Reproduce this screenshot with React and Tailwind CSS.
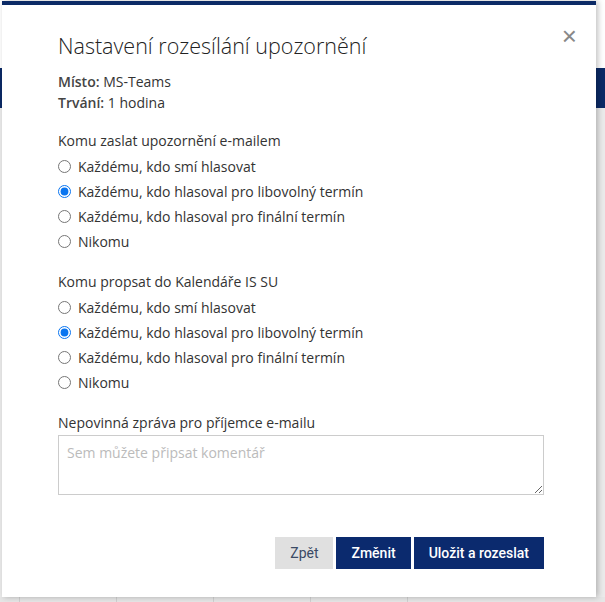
import React from 'react';

const RadioGroup = ({ name, checked }) => {
  const options = [
    'Každému, kdo smí hlasovat',
    'Každému, kdo hlasoval pro libovolný termín',
    'Každému, kdo hlasoval pro finální termín',
    'Nikomu',
  ];
  return (
    <div className="flex flex-col">
      {options.map((opt, i) => (
        <label key={opt} className="flex items-center h-[25px] cursor-pointer">
          <input
            type="radio"
            name={name}
            defaultChecked={i === checked}
            className="m-0 w-[13px] h-[13px] accent-[#0a75f0]"
          />
          <span className="ml-[7px]">{opt}</span>
        </label>
      ))}
    </div>
  );
};

export default function App() {
  return (
    <div className="relative w-[605px] h-[602px] overflow-hidden bg-[#ebebeb] text-[#333] font-['Open_Sans',sans-serif] text-[14px]">
      {/* page behind the modal */}
      <div className="h-[68px] bg-white" />
      <div className="h-[40px] bg-[#0b2a66]" />
      <div className="absolute bottom-0 left-0 right-0 h-[5px] bg-[#e6e6e6] flex">
        <div className="w-[20px] border-r border-[#d0d0d0]" />
        <div className="w-[97px] border-r border-[#d0d0d0]" />
        <div className="w-[97px] border-r border-[#d0d0d0]" />
        <div className="w-[97px] border-r border-[#d0d0d0]" />
        <div className="w-[97px] border-r border-[#d0d0d0]" />
      </div>

      {/* modal */}
      <div className="absolute left-[2px] top-[1px] w-[594px] h-[596px] bg-white border-t-[4px] border-[#0b2a66] shadow-[2px_0_6px_rgba(0,0,0,0.25)]">
        <button className="absolute right-[19px] top-[18px] text-[#888] text-[26px] leading-none font-['Liberation_Sans',sans-serif]">×</button>
        <div className="pl-[56px] pr-[52px] pt-[26px]">
          <h2 className="text-[21.5px] font-light leading-[30px] text-[#222]">
            Nastavení rozesílání upozornění
          </h2>
          <div className="mt-[10px] leading-[21px]">
            <div><b className="font-semibold text-[#444]">Místo:</b> MS-Teams</div>
            <div><b className="font-semibold text-[#444]">Trvání:</b> 1 hodina</div>
          </div>

          <div className="mt-[18px] leading-[20px]">Komu zaslat upozornění e-mailem</div>
          <div className="mt-[3px]">
            <RadioGroup name="mail" checked={1} />
          </div>

          <div className="mt-[18px] leading-[20px]">Komu propsat do Kalendáře IS SU</div>
          <div className="mt-[3px]">
            <RadioGroup name="cal" checked={1} />
          </div>

          <div className="mt-[18px] leading-[20px]">Nepovinná zpráva pro příjemce e-mailu</div>
          <textarea
            placeholder="Sem můžete připsat komentář"
            className="mt-[2px] block w-full h-[60px] border border-[#ccc] px-[8px] py-[6px] text-[14px] placeholder:text-[#bbb] outline-none"
          />

          <div className="mt-[42px] flex justify-end gap-[3px] font-['Roboto',sans-serif] text-[14px]">
            <button className="h-[32px] w-[58px] bg-[#e0e0e0] text-[#3a4a66]">Zpět</button>
            <button className="h-[32px] px-[15px] bg-[#0b2a6e] text-white font-medium">Změnit</button>
            <button className="h-[32px] px-[15px] bg-[#0b2a6e] text-white font-medium">Uložit a rozeslat</button>
          </div>
        </div>
      </div>
    </div>
  );
}
